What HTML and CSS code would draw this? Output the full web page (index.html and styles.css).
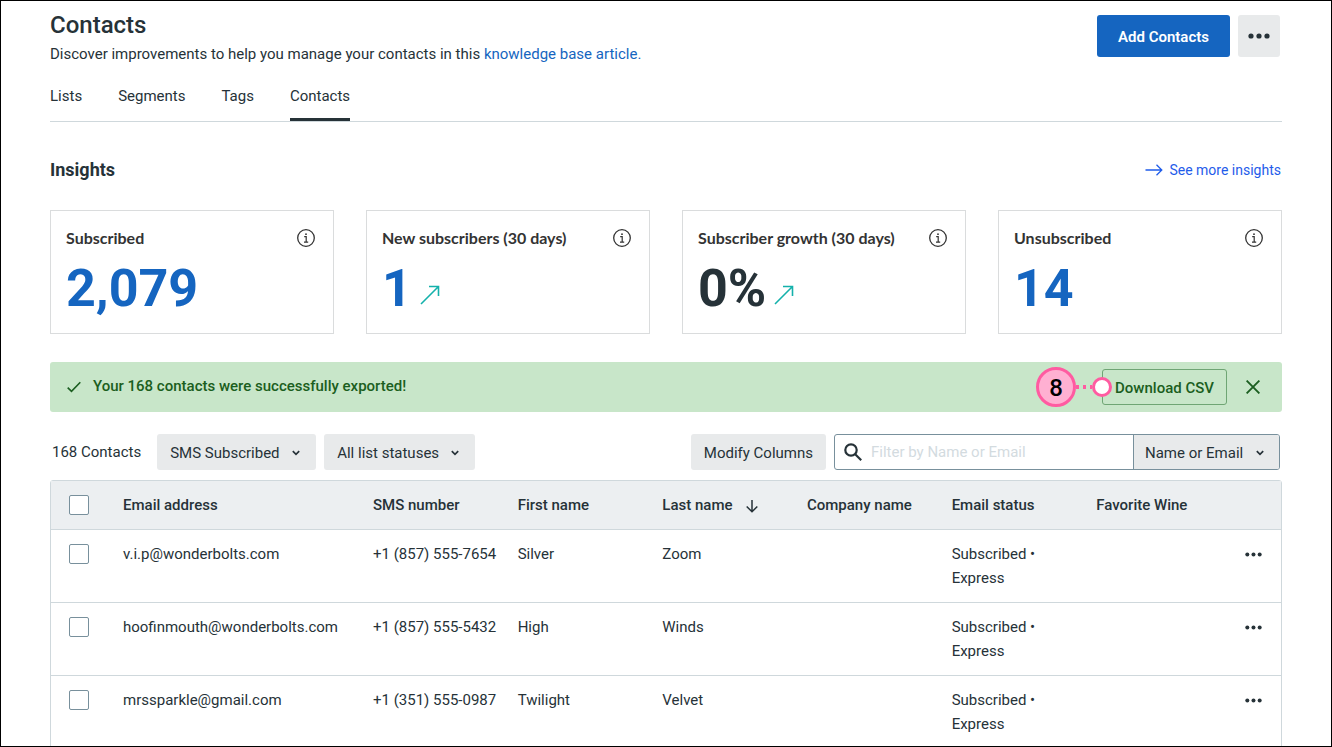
FILE: index.html
```html
<!DOCTYPE html>
<html lang="en">

<head>
    <meta charset="UTF-8">
    <meta name="viewport" content="width=device-width, initial-scale=1">
    <title>Contacts</title>
    <link rel="stylesheet" href="styles.css">
</head>

<body>
    <!-- Shared icons -->
    <svg class="sprite" aria-hidden="true">
        <symbol id="icon-info" viewBox="0 0 18 18">
            <circle cx="9" cy="9" r="8.3" fill="none" stroke="currentColor" stroke-width="1.3"/>
            <path d="M7.2 7.6h2v5.6M7 13.2h4.2" fill="none" stroke="currentColor" stroke-width="1.2"/>
            <circle cx="9" cy="5.2" r=".9" fill="currentColor"/>
        </symbol>
        <symbol id="icon-up" viewBox="0 0 20 20">
            <path d="M1 19L18.5 1.5M9 1.5h9.5V11" fill="none" stroke="currentColor" stroke-width="1.6"/>
        </symbol>
        <symbol id="icon-chevron" viewBox="0 0 8 6">
            <path d="M.8 1.2L4 4.4l3.2-3.2" fill="none" stroke="currentColor" stroke-width="1.7"/>
        </symbol>
        <symbol id="icon-dots" viewBox="0 0 22 6">
            <circle cx="3" cy="3" r="2.6" fill="currentColor"/>
            <circle cx="11" cy="3" r="2.6" fill="currentColor"/>
            <circle cx="19" cy="3" r="2.6" fill="currentColor"/>
        </symbol>
    </svg>

    <header class="page-header">
        <div>
            <h1>Contacts</h1>
            <p>Discover improvements to help you manage your contacts in this <a href="#">knowledge base article.</a></p>
        </div>
        <div class="header-actions">
            <button class="btn-primary" type="button">Add Contacts</button>
            <button class="btn-more" type="button" aria-label="More options"><svg width="22" height="6"><use href="#icon-dots"/></svg></button>
        </div>
    </header>

    <nav class="tabs">
        <a href="#">Lists</a>
        <a href="#">Segments</a>
        <a href="#">Tags</a>
        <a href="#" class="active">Contacts</a>
    </nav>

    <main>
        <div class="section-title">
            <h2>Insights</h2>
            <a href="#">
                <svg width="18" height="12" viewBox="0 0 18 12" fill="none" stroke="currentColor" stroke-width="1.3"><path d="M.5 6h16M11.5 .8L16.8 6l-5.3 5.2"/></svg>
                See more insights
            </a>
        </div>

        <section class="cards">
            <div class="card">
                <div class="card-label">Subscribed <svg width="18" height="18"><use href="#icon-info"/></svg></div>
                <div class="card-value">2,079</div>
            </div>
            <div class="card">
                <div class="card-label">New subscribers (30 days) <svg width="18" height="18"><use href="#icon-info"/></svg></div>
                <div class="card-value">1 <svg width="20" height="20"><use href="#icon-up"/></svg></div>
            </div>
            <div class="card">
                <div class="card-label">Subscriber growth (30 days) <svg width="18" height="18"><use href="#icon-info"/></svg></div>
                <div class="card-value dark">0% <svg width="20" height="20"><use href="#icon-up"/></svg></div>
            </div>
            <div class="card">
                <div class="card-label">Unsubscribed <svg width="18" height="18"><use href="#icon-info"/></svg></div>
                <div class="card-value">14</div>
            </div>
        </section>

        <div class="alert">
            <svg width="14" height="12" viewBox="0 0 14 12" fill="none" stroke="currentColor" stroke-width="1.6"><path d="M.7 6.6l3.8 3.8L13.3 1.2"/></svg>
            <p>Your 168 contacts were successfully exported!</p>
            <div class="download">
                <button class="btn-download" type="button">Download CSV</button>
                <div class="step">
                    <span class="step-number">8</span>
                    <span class="step-line"></span>
                    <span class="step-dot"></span>
                </div>
            </div>
            <button class="btn-close" type="button" aria-label="Close"><svg width="14" height="14" viewBox="0 0 14 14" fill="none" stroke="currentColor" stroke-width="1.9"><path d="M.6 .6l12.8 12.8M13.4 .6L.6 13.4"/></svg></button>
        </div>

        <div class="toolbar">
            <span class="count">168 Contacts</span>
            <div class="dropdown">
                <select aria-label="Channel">
                    <option>SMS Subscribed</option>
                </select>
                <svg width="8" height="6"><use href="#icon-chevron"/></svg>
            </div>
            <div class="dropdown">
                <select aria-label="List status">
                    <option>All list statuses</option>
                </select>
                <svg width="8" height="6"><use href="#icon-chevron"/></svg>
            </div>
            <button class="btn-columns" type="button">Modify Columns</button>
            <div class="search">
                <svg width="18" height="18" viewBox="0 0 18 18" fill="none" stroke="currentColor" stroke-width="2.2"><circle cx="7" cy="7" r="5.7"/><path d="M11 11l6.2 6.2"/></svg>
                <input type="text" placeholder="Filter by Name or Email" aria-label="Filter by Name or Email">
                <div class="dropdown">
                    <select aria-label="Filter field">
                        <option>Name or Email</option>
                    </select>
                    <svg width="8" height="6"><use href="#icon-chevron"/></svg>
                </div>
            </div>
        </div>

        <table>
            <colgroup>
                <col class="col-check">
                <col class="col-email">
                <col span="6">
                <col class="col-menu">
            </colgroup>
            <thead>
                <tr>
                    <th class="check"><input type="checkbox" aria-label="Select all"></th>
                    <th>Email address</th>
                    <th>SMS number</th>
                    <th>First name</th>
                    <th>Last name <svg class="sort" width="12" height="13" viewBox="0 0 12 13" fill="none" stroke="currentColor" stroke-width="1.5"><path d="M6 0v11.5M.7 6.5L6 11.8l5.3-5.3"/></svg></th>
                    <th>Company name</th>
                    <th>Email status</th>
                    <th>Favorite Wine</th>
                    <th></th>
                </tr>
            </thead>
            <tbody>
                <tr>
                    <td class="check"><input type="checkbox" aria-label="Select Silver Zoom"></td>
                    <td>v.i.p@wonderbolts.com</td>
                    <td>+1 (857) 555-7654</td>
                    <td>Silver</td>
                    <td>Zoom</td>
                    <td></td>
                    <td>Subscribed • Express</td>
                    <td></td>
                    <td class="menu"><button type="button" aria-label="Actions"><svg width="17" height="5"><use href="#icon-dots"/></svg></button></td>
                </tr>
                <tr>
                    <td class="check"><input type="checkbox" aria-label="Select High Winds"></td>
                    <td>hoofinmouth@wonderbolts.com</td>
                    <td>+1 (857) 555-5432</td>
                    <td>High</td>
                    <td>Winds</td>
                    <td></td>
                    <td>Subscribed • Express</td>
                    <td></td>
                    <td class="menu"><button type="button" aria-label="Actions"><svg width="17" height="5"><use href="#icon-dots"/></svg></button></td>
                </tr>
                <tr>
                    <td class="check"><input type="checkbox" aria-label="Select Twilight Velvet"></td>
                    <td>mrssparkle@gmail.com</td>
                    <td>+1 (351) 555-0987</td>
                    <td>Twilight</td>
                    <td>Velvet</td>
                    <td></td>
                    <td>Subscribed • Express</td>
                    <td></td>
                    <td class="menu"><button type="button" aria-label="Actions"><svg width="17" height="5"><use href="#icon-dots"/></svg></button></td>
                </tr>
            </tbody>
        </table>
    </main>
</body>

</html>
```

FILE: styles.css
```css
* {
    box-sizing: border-box;
}
body {
    height: 100vh;
    margin: 0;
    padding: 9px 49px 0;
    border: 1px solid #000;
    overflow: hidden;
    font-family: Roboto, sans-serif;
    font-size: 15px;
    line-height: 24px;
    color: #263238;
    background-color: #fff;
}
h1, h2, p {
    margin: 0;
}
h1 {
    font-size: 24px;
    font-weight: 500;
    line-height: 30px;
}
h2 {
    font-size: 18px;
    font-weight: 700;
}
a {
    color: #1565c0;
    text-decoration: none;
}
button, select, input {
    font: inherit;
    color: inherit;
}
button {
    padding: 0;
    border: none;
    border-radius: 3px;
    background: none;
    cursor: pointer;
}
svg {
    display: block;
    flex-shrink: 0;
}
.sprite {
    display: none;
}

/* Header */
.page-header {
    display: flex;
    justify-content: space-between;
}
.page-header p {
    margin-top: 2px;
}
.header-actions {
    display: flex;
    gap: 8px;
    padding: 5px 2px 0 0;
}
.btn-primary {
    height: 42px;
    padding: 2px 21px 0;
    font-weight: 600;
    color: #fff;
    background-color: #1565c0;
}
.btn-more {
    display: flex;
    align-items: center;
    justify-content: center;
    width: 42px;
    height: 42px;
    background-color: #e8eaeb;
}

/* Tabs */
.tabs {
    display: flex;
    gap: 36px;
    margin-top: 18px;
    border-bottom: 1px solid #cfd8dc;
}
.tabs a {
    padding-bottom: 10px;
    border-bottom: 3px solid transparent;
    color: #263238;
}
.tabs .active {
    border-color: #263238;
}

/* Insights */
.section-title {
    display: flex;
    align-items: center;
    justify-content: space-between;
    margin: 36px 1px 28px 0;
}
.section-title a {
    display: flex;
    align-items: center;
    gap: 6px;
    font-size: 14px;
    color: #1f5cea;
}
.cards {
    display: grid;
    grid-template-columns: repeat(4, 1fr);
    gap: 32px;
}
.card {
    padding: 15px 15px 12px;
    border: 1px solid #dadcdd;
}
.card-label {
    display: flex;
    align-items: center;
    justify-content: space-between;
    padding-right: 3px;
    font-family: Lato, sans-serif;
    font-size: 16px;
    font-weight: 700;
    color: #333;
}
.card-value {
    display: flex;
    align-items: center;
    gap: 8px;
    margin-top: 7px;
    font-size: 52px;
    font-weight: 700;
    line-height: 64px;
    color: #1565c0;
}
.card-value.dark {
    color: #263238;
}
.card-value svg {
    margin-top: 12px;
    color: #14b1ab;
}

/* Export message */
.alert {
    display: flex;
    align-items: center;
    gap: 12px;
    height: 50px;
    margin: 28px 0 22px;
    padding: 0 15px 0 17px;
    border-radius: 3px;
    font-weight: 500;
    color: #1b5e20;
    background-color: #c8e6c9;
}
.alert p {
    padding-bottom: 2px;
}
.download {
    position: relative;
    margin-left: auto;
}
.btn-download {
    display: block;
    height: 36px;
    padding: 2px 12px 0;
    border: 1px solid #6fa574;
}
.btn-close {
    margin-right: 0;
    padding: 7px;
}
.step {
    position: absolute;
    top: -2px;
    left: -66px;
    display: flex;
    align-items: center;
}
.step-number {
    width: 40px;
    height: 40px;
    border: 3px solid #ff5ba1;
    border-radius: 50%;
    font-size: 24px;
    line-height: 36px;
    text-align: center;
    color: #000;
    background-color: #ffb0d2;
}
.step-line {
    width: 16px;
    height: 4px;
    background: repeating-linear-gradient(to right, #ff5ba1 0 3px, transparent 3px 7px);
}
.step-dot {
    width: 20px;
    height: 20px;
    border: 3px solid #ff5ba1;
    border-radius: 50%;
    background-color: #fff;
}

/* Filters */
.toolbar {
    display: flex;
    align-items: center;
    gap: 8px;
    padding: 0 2px;
}
.count {
    margin-right: 8px;
}
.dropdown {
    position: relative;
}
.dropdown select {
    display: block;
    height: 36px;
    padding: 1px 36px 0 13px;
    border: none;
    border-radius: 3px;
    appearance: none;
    background-color: #e8eaeb;
}
.dropdown svg {
    position: absolute;
    top: 16px;
    right: 16px;
    pointer-events: none;
}
.btn-columns {
    height: 36px;
    margin-left: auto;
    padding: 1px 13px 0;
    background-color: #e8eaeb;
}
.search {
    display: flex;
    align-items: center;
    width: 446px;
    height: 36px;
    padding-left: 9px;
    border: 1px solid #78909c;
    border-radius: 3px;
}
.search input {
    flex: 1;
    min-width: 0;
    height: 34px;
    padding: 0 0 0 9px;
    border: none;
    outline: none;
    background: none;
}
.search input::placeholder {
    color: #d3dbdf;
}
.search select {
    height: 34px;
    padding-left: 11px;
    padding-right: 35px;
    border-left: 1px solid #78909c;
    border-radius: 0 2px 2px 0;
}
.search .dropdown svg {
    top: 15px;
    right: 15px;
}

/* Contacts table */
table {
    width: 100%;
    margin-top: 10px;
    border: 1px solid #cfd8dc;
    border-radius: 3px;
    border-spacing: 0;
    table-layout: fixed;
}
.col-check {
    width: 60px;
}
.col-email {
    width: 250px;
}
.col-menu {
    width: 52px;
}
th, td {
    padding: 12px 0 12px 12px;
    border-bottom: 1px solid #cfd8dc;
    text-align: left;
    vertical-align: top;
}
th {
    font-weight: 500;
    background-color: #eceff1;
}
td:nth-child(7) {
    padding-right: 12px;
}
.sort {
    display: inline-block;
    margin-left: 10px;
    vertical-align: -3px;
}
.check {
    padding-left: 18px;
}
.check input {
    display: block;
    width: 20px;
    height: 20px;
    margin: 2px 0;
    border: 1px solid #78909c;
    border-radius: 2px;
    appearance: none;
    background-color: #fff;
}
.menu button {
    display: flex;
    align-items: center;
    height: 24px;
    padding: 0 4px;
}
```
